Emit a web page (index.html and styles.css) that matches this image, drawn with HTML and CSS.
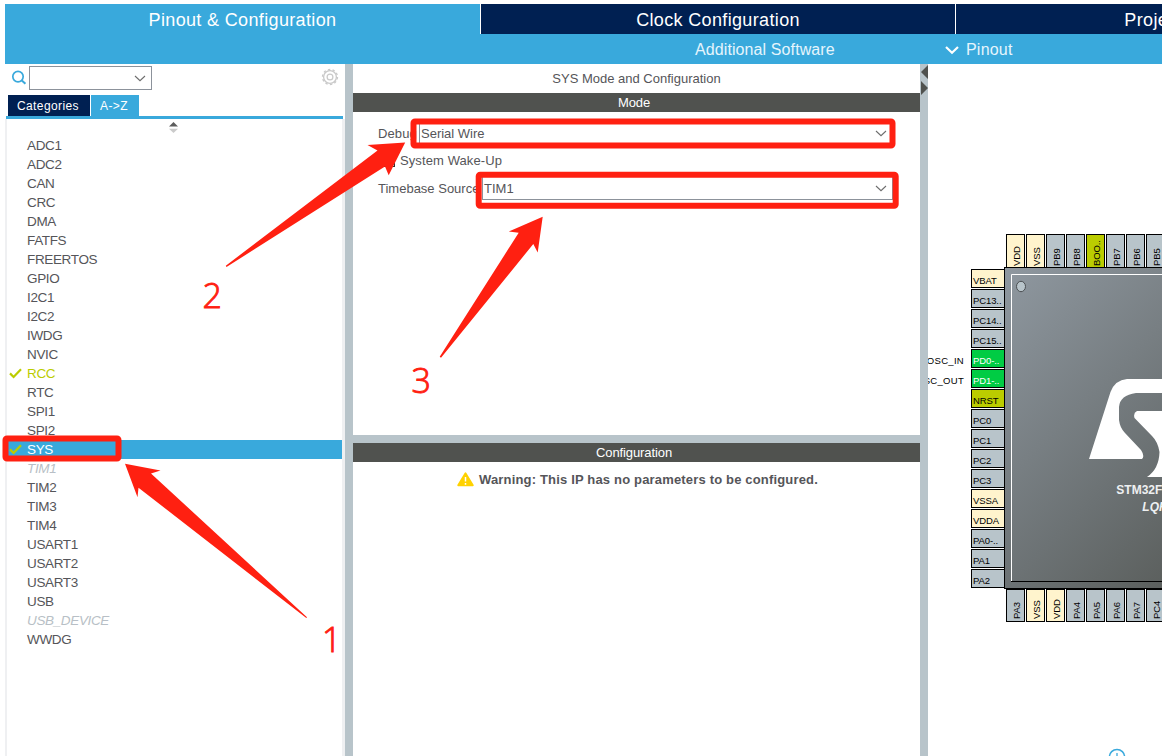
FILE: index.html
```html
<!DOCTYPE html>
<html lang="en">
<head>
<meta charset="utf-8">
<title>Pinout &amp; Configuration</title>
<link rel="stylesheet" href="styles.css">
</head>
<body>
<div class="app">
  <nav class="main-tabs">
    <div class="main-tab active"><span>Pinout &amp; Configuration</span></div>
    <div class="main-tab"><span>Clock Configuration</span></div>
    <div class="main-tab"><span>Project Manager</span></div>
  </nav>
  <div class="sub-bar">
    <span class="additional">Additional Software</span>
    <svg class="sub-chevron" width="14" height="10" viewBox="0 0 14 10"><path d="M1 2 L7 7.8 L13 2" fill="none" stroke="#fff" stroke-width="2.2"/></svg>
    <span class="pinout-menu">Pinout</span>
  </div>

  <div class="workspace">
    <aside class="sidebar">
      <div class="search-row">
        <svg class="search-icon" width="16" height="16" viewBox="0 0 16 16"><circle cx="7" cy="6.6" r="5.2" fill="none" stroke="#39a9dc" stroke-width="1.7"/><path d="M10.8 10.4 L14.4 13.8" stroke="#39a9dc" stroke-width="2"/></svg>
        <div class="search-box"><svg width="12" height="7" viewBox="0 0 12 7"><path d="M1 1 L6 5.7 L11 1" fill="none" stroke="#6d6d6d" stroke-width="1.1"/></svg></div>
        <svg class="gear" width="18" height="18" viewBox="0 0 18 18"><circle cx="9" cy="9" r="6.4" fill="none" stroke="#c9c9c9" stroke-width="1.3"/><circle cx="9" cy="9" r="7.5" fill="none" stroke="#c9c9c9" stroke-width="1.3" stroke-dasharray="2.4 2.312"/><circle cx="9" cy="9" r="2.9" fill="none" stroke="#c9c9c9" stroke-width="1.2"/></svg>
      </div>
      <div class="list-tabs">
        <div class="list-tab categories">Categories</div>
        <div class="list-tab az">A-&gt;Z</div>
      </div>
      <div class="list">
        <div class="sorter"><svg width="9" height="11" viewBox="0 0 9 11"><path d="M0 4.5 L4.5 0 L9 4.5Z" fill="#5c5c5c"/><path d="M0 6.8 L4.5 11 L9 6.8Z" fill="#cbcbcb"/></svg></div>
        <ul>
          <li>ADC1</li><li>ADC2</li><li>CAN</li><li>CRC</li><li>DMA</li><li>FATFS</li><li>FREERTOS</li><li>GPIO</li><li>I2C1</li><li>I2C2</li><li>IWDG</li><li>NVIC</li>
          <li class="done"><svg width="13" height="11" viewBox="0 0 13 11"><path d="M1 5.4 L4.6 9 L12 1.2" fill="none" stroke="#bbcc00" stroke-width="2.2"/></svg>RCC</li>
          <li>RTC</li><li>SPI1</li><li>SPI2</li>
          <li class="done selected"><svg width="13" height="11" viewBox="0 0 13 11"><path d="M1 5.4 L4.6 9 L12 1.2" fill="none" stroke="#bbcc00" stroke-width="2.2"/></svg>SYS</li>
          <li class="off">TIM1</li><li>TIM2</li><li>TIM3</li><li>TIM4</li><li>USART1</li><li>USART2</li><li>USART3</li><li>USB</li>
          <li class="off">USB_DEVICE</li><li>WWDG</li>
        </ul>
      </div>
    </aside>
    <div class="splitter"></div>

    <main class="config">
      <section class="mode">
        <h1>SYS Mode and Configuration</h1>
        <h2>Mode</h2>
        <div class="form">
          <div class="field debug"><label>Debug</label><div class="select"><span>Serial Wire</span><svg width="12" height="7" viewBox="0 0 12 7"><path d="M1 1 L6 5.7 L11 1" fill="none" stroke="#6d6d6d" stroke-width="1.1"/></svg></div></div>
          <div class="field wake"><i class="checkbox"></i><label>System Wake-Up</label></div>
          <div class="field timebase"><label>Timebase Source</label><div class="select"><span>TIM1</span><svg width="12" height="7" viewBox="0 0 12 7"><path d="M1 1 L6 5.7 L11 1" fill="none" stroke="#6d6d6d" stroke-width="1.1"/></svg></div></div>
        </div>
      </section>
      <div class="h-splitter"></div>
      <section class="parameters">
        <h2>Configuration</h2>
        <p class="warning"><svg width="17" height="15" viewBox="0 0 17 15"><path d="M8.5 1.2 L15.8 13.3 H1.2Z" fill="#ffd200" stroke="#ffd200" stroke-width="1.8" stroke-linejoin="round"/><path d="M8.5 5 V9.6 M8.5 11 V12.8" stroke="#fff" stroke-width="1.5"/></svg><span>Warning: This IP has no parameters to be configured.</span></p>
      </section>
    </main>
    <div class="splitter"><svg width="8" height="32" viewBox="0 0 8 32"><path d="M8 1 V15 L1 8Z M1 17 V31 L8 24Z" fill="#50524f"/></svg></div>

    <section class="pinout">
      <div class="package">
        <div class="signals"><span>RCC_OSC_IN</span><span>RCC_OSC_OUT</span></div>
        <div class="pins left">
          <b class="power">VBAT</b><b>PC13..</b><b>PC14..</b><b>PC15..</b><b class="used">PD0-..</b><b class="used">PD1-..</b><b class="reset">NRST</b><b>PC0</b><b>PC1</b><b>PC2</b><b>PC3</b><b class="power">VSSA</b><b class="power">VDDA</b><b>PA0-..</b><b>PA1</b><b>PA2</b>
        </div>
        <div class="pins top">
          <b class="power">VDD</b><b class="power">VSS</b><b>PB9</b><b>PB8</b><b class="reset">BOO..</b><b>PB7</b><b>PB6</b><b>PB5</b>
        </div>
        <div class="die">
          <svg width="322" height="322" viewBox="1004 267 322 322">
            <defs><linearGradient id="shade" x1="0" y1="0" x2="1" y2="1"><stop offset="0" stop-color="#8f98a0"/><stop offset=".5" stop-color="#6c7274"/><stop offset=".75" stop-color="#5b5f5d"/><stop offset="1" stop-color="#50524f"/></linearGradient></defs>
            <rect x="1004.5" y="267.5" width="321" height="321" fill="url(#shade)" stroke="#000"/>
            <path d="M1011.5 581 V274.5 H1319" fill="none" stroke="#fff"/>
            <path d="M1011 581.5 H1319.5 V274" fill="none" stroke="#000"/>
            <ellipse cx="1021" cy="286.5" rx="4.5" ry="5.2" fill="#b8c4ca" stroke="#4b4f52"/>
            <path fill="#fff" d="M1089 459 L1110.500 392 Q1115 380 1127 379 H1230 V393 H1136 Q1120 395 1119 407 V420 Q1120 428 1125 433 L1141 450 Q1145 456 1142 459Z"/>
            <path fill="#fff" d="M1137 411 H1210 V477 H1147 Q1159 469 1159.500 452 Q1158 442 1152 436 L1134.500 418 Q1133 413 1137 411Z"/>
          </svg>
          <div class="part">STM32F103RCTx</div>
          <div class="case">LQFP64</div>
        </div>
        <div class="pins bottom">
          <b>PA3</b><b class="power">VSS</b><b class="power">VDD</b><b>PA4</b><b>PA5</b><b>PA6</b><b>PA7</b><b>PC4</b>
        </div>
      </div>
      <svg class="zoom-tool" width="18" height="18" viewBox="0 0 18 18"><circle cx="9" cy="9" r="7.600" fill="none" stroke="#39a9dc" stroke-width="1.500"/><path d="M9 5 V13 M5 9 H13" stroke="#39a9dc" stroke-width="1.300"/></svg>
    </section>
  </div>

  <svg class="callouts" width="1162" height="756" viewBox="0 0 1162 756">
    <g fill="none" stroke="#ff2011" stroke-width="6">
      <rect x="5.500" y="438.500" width="113" height="20" rx="1.500"/>
      <rect x="413.500" y="121.500" width="479" height="24" rx="1.500"/>
      <rect x="478.700" y="174.700" width="417" height="31" rx="1.500"/>
    </g>
    <g fill="#ff2011">
      <path d="M125 463.700 L160.500 470.400 L151 473.500 L307 617.200 L306.300 618 L138.500 487.700 L137.500 497.300Z"/>
      <path d="M405.200 142.600 L367.500 145 L377.500 150.500 L225.800 265.700 L226.500 267 L385 166.500 L388.700 175.300Z"/>
      <path d="M542.700 216.800 L508.800 231.600 L518.700 232.700 L439.700 356.800 L441 357.700 L533.300 244 L537.700 252.500Z"/>
      <text x="322" y="652">1</text>
      <text x="202.500" y="308">2</text>
      <text x="411.500" y="393">3</text>
    </g>
  </svg>
</div>
</body>
</html>
```
FILE: styles.css
```css
* { box-sizing: border-box; }
body { margin: 0; background: #fff; font-family: "Liberation Sans", Arial, sans-serif; font-size: 13px; color: #555559; }
.app { position: relative; width: 1162px; height: 756px; padding: 4px 0 0 5px; overflow: hidden; display: flex; flex-direction: column; }

.main-tabs { display: flex; flex: none; height: 30px; gap: 1px; overflow: hidden; }
.main-tab { flex: none; width: 474px; background: #002052; color: #fff; font-size: 18px; line-height: 32px; text-align: center; white-space: nowrap; }
.main-tab.active { width: 475px; background: #39a9dc; }
.main-tab span { letter-spacing: 0.35px; }
.sub-bar { flex: none; height: 30px; background: #39a9dc; color: #e6f5fc; display: flex; align-items: center; font-size: 16px; padding: 1px 0 0 690px; white-space: nowrap; }
.additional { width: 250px; letter-spacing: 0.1px; }
.pinout-menu { margin-left: 7px; letter-spacing: 0.2px; }

.workspace { flex: 1; display: flex; min-height: 0; }
.sidebar { width: 340px; flex: none; display: flex; flex-direction: column; }
.search-row { height: 31px; flex: none; display: flex; align-items: flex-start; padding: 2px 6px 0 6px; }
.search-icon { margin: 4px 2px 0 0; }
.search-box { width: 123px; height: 24px; border: 1px solid #8c929b; display: flex; align-items: center; justify-content: flex-end; padding-right: 5px; }
.gear { margin: 2px 0 0 auto; }
.list-tabs { display: flex; flex: none; gap: 1px; padding-left: 3px; height: 24px; margin-right: 2px; border-bottom: 3px solid #39a9dc; margin-left: 1px; }
.list-tab { height: 21px; line-height: 22px; color: #fff; text-align: center; font-size: 12px; letter-spacing: 0.4px; padding-right: 2px; }
.categories { width: 82px; background: #002052; margin-left: -1px; }
.az { width: 48px; background: #39a9dc; }
.list { flex: 1; border-left: 2px solid #eff0f2; border-right: 3px solid #eff0f2; }
.sorter { height: 17px; padding: 3px 0 0 162px; line-height: 0; }
.list ul { list-style: none; margin: 0; padding: 0; }
.list li { height: 19px; line-height: 19px; padding-left: 20px; display: flex; align-items: center; font-size: 13.5px; letter-spacing: -0.35px; }
.list li.done { padding-left: 2px; color: #bbcc00; }
.list li.done svg { margin-right: 5px; }
.list li.selected { background: #39a9dc; color: #fff; }
.list li.off { color: #b8bfc6; font-style: italic; }

.splitter { flex: none; width: 8px; background: #b8c4ca; }
.h-splitter { flex: none; height: 8px; background: #b8c4ca; }
.config { flex: none; width: 567px; display: flex; flex-direction: column; }
.mode { height: 371px; flex: none; }
h1 { margin: 0; height: 29px; line-height: 29px; font-size: 13px; font-weight: normal; text-align: center; }
h2 { margin: 0; height: 19px; line-height: 19px; font-size: 13px; font-weight: normal; text-align: center; background: #50524f; color: #fff; padding-right: 5px; letter-spacing: -0.1px; }
.form { padding: 9px 27px 0 25px; }
.field { display: flex; align-items: center; white-space: nowrap; }
.debug { height: 25px; }
.wake { height: 29px; }
.timebase { height: 26px; }
.field label { letter-spacing: 0.1px; }
.debug label { width: 41px; }
.timebase label { width: 104px; letter-spacing: 0; }
.select { flex: 1; height: 24px; border: 1px solid #8c929b; display: flex; align-items: center; justify-content: space-between; padding: 0 5px 0 1px; }
.checkbox { width: 13px; height: 13px; border: 1px solid #333; margin: 0 5px 0 4px; }
.warning { display: flex; align-items: center; justify-content: center; gap: 5px; margin: 8px 0 0; padding-left: 2px; height: 18px; font-weight: bold; letter-spacing: 0.17px; }

.pinout { flex: 1; min-width: 0; position: relative; overflow: hidden; }
.package { display: grid; grid-template-columns: 43px 33px 322px; grid-template-rows: 33px 322px 33px; margin-top: 170px; height: 388px; }
.pins b, .signals { font-size: 9.5px; font-weight: normal; color: #000; letter-spacing: -0.1px; }
.pins { display: flex; gap: 1px; }
.pins b { flex: none; background: #b8c4ca; border: 1px solid #000; white-space: nowrap; }
.pins .power { background: #fff4cd; }
.pins .used { background: #00cc44; color: #fff; }
.pins .reset { background: #bbcc00; }
.pins.left { grid-column: 2; grid-row: 2; flex-direction: column; padding-top: 2px; }
.left b { height: 19px; width: 34px; line-height: 21px; padding-left: 1px; }
.pins.top { grid-column: 3; grid-row: 1; padding-left: 2px; }
.pins.bottom { grid-column: 3; grid-row: 3; padding-left: 2px; }
.pins.top b, .pins.bottom b { width: 19px; height: 34px; writing-mode: vertical-rl; transform: rotate(180deg); line-height: 20px; padding-top: 1px; }
.pins.bottom b { height: 33px; padding-top: 2px; }
.signals { grid-column: 1; grid-row: 2; display: flex; flex-direction: column; align-items: flex-end; padding: 84px 7px 0 0; line-height: 20px; letter-spacing: 0.3px; }
.die { grid-column: 3; grid-row: 2; position: relative; z-index: 1; color: #eef0f1; text-align: center; }
.die svg { display: block; }
.part, .case { position: absolute; left: 0; width: 322px; font-size: 12px; font-weight: bold; line-height: 16px; }
.part { top: 215px; }
.case { top: 232px; font-style: italic; }
.zoom-tool { position: absolute; left: 180px; top: 684px; }
.callouts { position: absolute; left: 0; top: 0; z-index: 2; }
.callouts text { font-family: "Open Sans", "Noto Sans", sans-serif; font-size: 34px; font-weight: 300; stroke: #ff2011; stroke-width: 0.9px; }
```
